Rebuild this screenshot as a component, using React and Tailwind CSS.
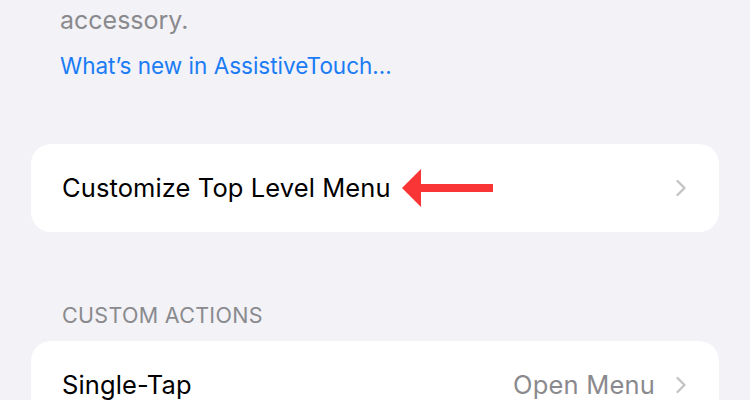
import React from "react";

function Chevron() {
  return (
    <svg width="12" height="18" viewBox="0 0 12 18" fill="none" className="shrink-0">
      <path d="M2.5 2 L9.5 9 L2.5 16" stroke="#c4c4c7" strokeWidth="2.4" strokeLinecap="round" strokeLinejoin="round" />
    </svg>
  );
}

function RedArrow() {
  return (
    <svg width="92" height="38" viewBox="0 0 92 38" className="shrink-0">
      <polygon points="0,19 19,0 19,15 91,15 91,23 19,23 19,38" fill="#f93535" />
    </svg>
  );
}

export default function App() {
  return (
    <div className="w-[750px] h-[400px] overflow-hidden bg-[#f2f2f7] px-[31px]" style={{ fontFamily: "Inter, 'Liberation Sans', sans-serif" }}>
      <div className="pl-[29px]">
        <p className="text-[25px] leading-[40px] text-[#8a8a8e]">accessory.</p>
        <p className="mt-[6px] text-[22.5px] leading-[40px] text-[#1a7cf5]">What’s new in AssistiveTouch…</p>
      </div>

      <div className="mt-[58px] h-[88px] bg-white rounded-[20px] flex items-center pl-[31px] pr-[32px]">
        <span className="text-[25.5px] tracking-[0.1px] text-black">Customize Top Level Menu</span>
        <span className="ml-[11px] flex items-center"><RedArrow /></span>
        <span className="flex-1" />
        <Chevron />
      </div>

      <p className="mt-[69px] pl-[31px] text-[21.5px] tracking-[0.3px] leading-[28px] text-[#8a8a8e]">CUSTOM ACTIONS</p>

      <div className="mt-[12px] h-[88px] bg-white rounded-[20px] flex items-center pl-[31px] pr-[32px]">
        <span className="text-[25.5px] tracking-[0.1px] text-black">Single-Tap</span>
        <span className="flex-1" />
        <span className="text-[25.5px] tracking-[0.2px] text-[#8a8a8e] mr-[20px]">Open Menu</span>
        <Chevron />
      </div>
    </div>
  );
}
